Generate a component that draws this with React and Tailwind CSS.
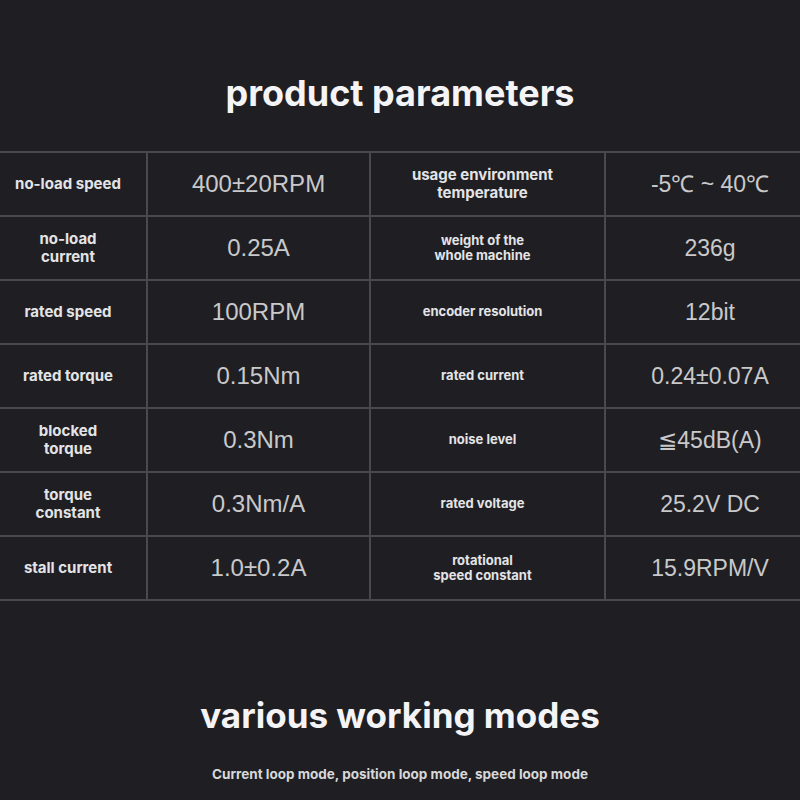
import React from 'react';

const rows = [
    { label: ['no-load speed'], value: '400±20RPM', label2: ['usage environment', 'temperature'], size2: 'text-[15px] leading-[18px]', value2: '-5℃ ~ 40℃' },
    { label: ['no-load', 'current'], value: '0.25A', label2: ['weight of the', 'whole machine'], size2: 'text-[13px] leading-[15px]', value2: '236g' },
    { label: ['rated speed'], value: '100RPM', label2: ['encoder resolution'], size2: 'text-[13px]', value2: '12bit' },
    { label: ['rated torque'], value: '0.15Nm', label2: ['rated current'], size2: 'text-[13px]', value2: '0.24±0.07A' },
    { label: ['blocked', 'torque'], value: '0.3Nm', label2: ['noise level'], size2: 'text-[13px]', value2: '≦45dB(A)' },
    { label: ['torque', 'constant'], value: '0.3Nm/A', label2: ['rated voltage'], size2: 'text-[13px]', value2: '25.2V DC' },
    { label: ['stall current'], value: '1.0±0.2A', label2: ['rotational', 'speed constant'], size2: 'text-[13px] leading-[15px]', value2: '15.9RPM/V' },
];

export default function App() {
    return (
        <div className="w-[800px] h-[800px] bg-[#1f1f23] overflow-hidden font-['Inter','Noto_Sans',sans-serif]">
            <div className="h-[151px] pt-[73px]">
                <h1 className="text-center text-[36px] leading-[40px] font-bold text-[#f4f4f6]">product parameters</h1>
            </div>

            <div className="grid grid-cols-[146px_221px_233px_1fr] gap-[2px] py-[2px] bg-[#4a4a4e]">
                {rows.map((r) => (
                    <React.Fragment key={r.value}>
                        <div className="h-[62px] bg-[#1f1f23] flex flex-col items-center justify-center text-center text-[15px] leading-[18px] font-bold text-[#e4e4e6] pr-[10px]">
                            {r.label.map((t) => <span key={t}>{t}</span>)}
                        </div>
                        <div className="h-[62px] bg-[#1f1f23] flex items-center justify-center font-['Liberation_Sans',Arial,sans-serif] text-[24px] text-[#c9c9cb]">
                            {r.value}
                        </div>
                        <div className={`h-[62px] bg-[#1f1f23] flex flex-col items-center justify-center text-center font-bold text-[#e4e4e6] pr-[10px] ${r.size2}`}>
                            {r.label2.map((t) => <span key={t}>{t}</span>)}
                        </div>
                        <div className="h-[62px] bg-[#1f1f23] flex items-center justify-center font-['Liberation_Sans',Arial,sans-serif] text-[23px] text-[#c9c9cb] pl-[14px]">
                            {r.value2}
                        </div>
                    </React.Fragment>
                ))}
            </div>

            <div className="pt-[94px] text-center">
                <h2 className="text-[35px] leading-[40px] font-bold text-[#f4f4f6]">various working modes</h2>
                <p className="mt-[29px] text-[13.5px] font-bold text-[#d8d8da]">Current loop mode, position loop mode, speed loop mode</p>
            </div>
        </div>
    );
}
